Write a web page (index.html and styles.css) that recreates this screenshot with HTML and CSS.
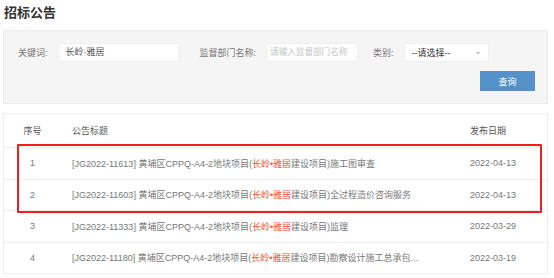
FILE: index.html
```html
<!DOCTYPE html>
<html lang="zh-CN">
<head>
    <meta charset="UTF-8">
    <title>招标公告</title>
    <link rel="stylesheet" href="styles.css">
</head>
<body>
    <div class="page">
        <h1 class="page-title">招标公告</h1>

        <div class="search-panel">
            <div class="search-row">
                <div class="field">
                    <label class="field-label">关键词:</label>
                    <div class="text-input kw">长岭·雅居</div>
                </div>
                <div class="field dept">
                    <label class="field-label">监督部门名称:</label>
                    <div class="text-input dept-input placeholder">请输入监督部门名称</div>
                </div>
                <div class="field cat">
                    <label class="field-label">类别:</label>
                    <div class="select-box">
                        <span>--请选择--</span>
                        <span class="caret"></span>
                    </div>
                </div>
            </div>
            <div class="button-row">
                <button class="search-btn">查询</button>
            </div>
        </div>

        <div class="notice-card">
            <div class="notice-row head">
                <div class="col-no">序号</div>
                <div class="col-title">公告标题</div>
                <div class="col-date">发布日期</div>
            </div>
            <div class="notice-row">
                <div class="col-no">1</div>
                <div class="col-title">[JG2022-11613] 黄埔区CPPQ-A4-2地块项目(<span class="hl">长岭•雅居</span>建设项目)施工图审查</div>
                <div class="col-date">2022-04-13</div>
            </div>
            <div class="notice-row">
                <div class="col-no">2</div>
                <div class="col-title">[JG2022-11603] 黄埔区CPPQ-A4-2地块项目(<span class="hl">长岭•雅居</span>建设项目)全过程造价咨询服务</div>
                <div class="col-date">2022-04-13</div>
            </div>
            <div class="notice-row">
                <div class="col-no">3</div>
                <div class="col-title">[JG2022-11333] 黄埔区CPPQ-A4-2地块项目(<span class="hl">长岭•雅居</span>建设项目)监理</div>
                <div class="col-date">2022-03-29</div>
            </div>
            <div class="notice-row">
                <div class="col-no">4</div>
                <div class="col-title">[JG2022-11180] 黄埔区CPPQ-A4-2地块项目(<span class="hl">长岭•雅居</span>建设项目)勘察设计施工总承包...</div>
                <div class="col-date">2022-03-19</div>
            </div>

            <div class="mark-box"></div>
        </div>
    </div>
</body>
</html>
```

FILE: styles.css
```css
body {
    margin: 0;
    background-color: #fff;
    font-family: "Liberation Sans", "Noto Sans CJK SC", sans-serif;
    color: #666;
}
.page {
    padding: 0 6px 0 3px;
    width: 545px;
}
.page-title {
    margin: 0;
    padding: 4px 0 0 1px;
    height: 26px;
    line-height: 18px;
    font-size: 13px;
    font-weight: bold;
    color: #333;
}
.search-panel {
    background-color: #f5f5f5;
    border: 1px solid #ebebeb;
    padding: 12px 12px 10px 14px;
    height: 50px;
}
.search-row {
    display: flex;
    align-items: center;
    height: 19px;
}
.field {
    display: flex;
    align-items: center;
}
.field.dept {
    margin-left: 21px;
}
.field.cat {
    margin-left: 15px;
}
.field-label {
    font-size: 9px;
    color: #777;
    margin-right: 10px;
}
.text-input {
    background-color: #fff;
    border: 1px solid #f0f0f0;
    height: 17px;
    line-height: 17px;
    font-size: 9px;
    color: #555;
    padding-left: 7px;
    box-sizing: content-box;
}
.text-input.kw {
    width: 112px;
}
.text-input.dept-input {
    width: 87px;
    padding-left: 3px;
    font-size: 8.6px;
    overflow: hidden;
    white-space: nowrap;
}
.placeholder {
    color: #c4c4c4;
}
.select-box {
    background-color: #fff;
    border: 1px solid #f0f0f0;
    width: 76px;
    height: 17px;
    padding-left: 7px;
    display: flex;
    align-items: center;
    justify-content: space-between;
    font-size: 9px;
    color: #333;
}
.caret {
    width: 0;
    height: 0;
    border-left: 2.5px solid transparent;
    border-right: 2.5px solid transparent;
    border-top: 2.5px solid #aaa;
    margin-right: 8px;
}
.button-row {
    display: flex;
    justify-content: flex-end;
    margin-top: 9px;
}
.search-btn {
    width: 55px;
    height: 20px;
    padding: 0;
    border: none;
    background-color: #5592c9;
    color: #fff;
    font-family: inherit;
    font-size: 9px;
}
.notice-card {
    position: relative;
    margin-top: 9px;
    border: 1px solid #ececec;
    background-color: #fff;
}
.notice-row {
    display: flex;
    align-items: center;
    height: 31.5px;
    border-top: 1px solid #eee;
    box-sizing: border-box;
    font-size: 9px;
    color: #777;
    white-space: nowrap;
}
.notice-row.head {
    height: 33px;
    border-top: none;
    color: #555;
}
.col-no {
    width: 57px;
    text-align: center;
}
.col-title {
    flex: 1;
    padding-left: 11px;
    overflow: hidden;
}
.col-date {
    width: 77px;
}
.hl {
    color: #f4532f;
}
.mark-box {
    position: absolute;
    left: 13px;
    top: 30px;
    width: 521px;
    height: 65px;
    border: 2px solid #f21d1d;
    border-radius: 1px;
}
```
